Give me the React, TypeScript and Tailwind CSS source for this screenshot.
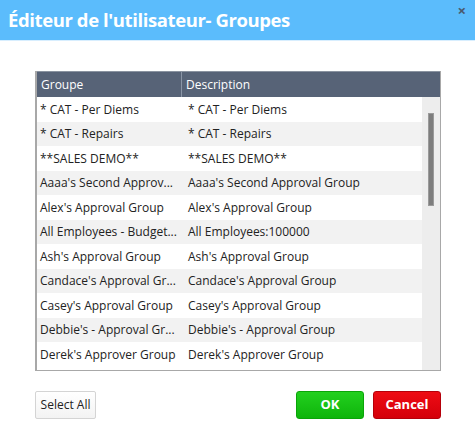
import React from "react";

const rows: [string, string][] = [
  ["* CAT - Per Diems", "* CAT - Per Diems"],
  ["* CAT - Repairs", "* CAT - Repairs"],
  ["**SALES DEMO**", "**SALES DEMO**"],
  ["Aaaa's Second Approv...", "Aaaa's Second Approval Group"],
  ["Alex's Approval Group", "Alex's Approval Group"],
  ["All Employees - Budget...", "All Employees:100000"],
  ["Ash's Approval Group", "Ash's Approval Group"],
  ["Candace's Approval Gr...", "Candace's Approval Group"],
  ["Casey's Approval Group", "Casey's Approval Group"],
  ["Debbie's - Approval Gr...", "Debbie's - Approval Group"],
  ["Derek's Approver Group", "Derek's Approver Group"],
];

export default function App() {
  return (
    <div
      className="w-[475px] h-[428px] bg-white flex flex-col overflow-hidden"
      style={{ fontFamily: '"Open Sans", "Noto Sans", sans-serif' }}
    >
      <div className="h-[41px] bg-[#5bbcfc] border-b border-[#d8eefe] flex items-center justify-between pl-[8px] pr-[9px] shrink-0">
        <span className="text-white font-bold text-[18.5px] leading-none tracking-[-0.4px]">
          Éditeur de l'utilisateur- Groupes
        </span>
        <span className="text-[#4a5a70] text-[15px] font-bold leading-none self-start mt-[3px]">×</span>
      </div>
      <div className="pl-[35px] pt-[30px] flex flex-col">
        <div className="w-[406px] h-[300px] border-l-2 border-r border-b border-[#a8a8a8] flex flex-col">
          <div className="h-[26px] bg-[#576377] flex text-white text-[12px] shrink-0 border-t border-[#8a93a0]">
            <div className="w-[145px] pl-[4px] flex items-center border-r border-[#8a95a6]">Groupe</div>
            <div className="flex-1 pl-[4px] flex items-center">Description</div>
          </div>
          <div className="flex flex-1 overflow-hidden">
            <div className="flex-1 flex flex-col">
              {rows.map((r, i) => (
                <div
                  key={i}
                  className={`h-[24.5px] shrink-0 flex items-center text-[12px] text-[#222] pt-[1px] ${
                    i % 2 === 1 ? "bg-[#f2f2f2]" : "bg-white"
                  }`}
                >
                  <div className="w-[147px] pl-[3px] whitespace-nowrap overflow-hidden">{r[0]}</div>
                  <div className="flex-1 pl-[4px] whitespace-nowrap overflow-hidden">{r[1]}</div>
                </div>
              ))}
            </div>
            <div className="w-[18px] bg-[#ededed] flex justify-center pt-[16px]">
              <div className="w-[6px] h-[93px] bg-[#7d7d7d] border border-[#9a9a9a]" />
            </div>
          </div>
        </div>
        <div className="flex items-center mt-[20px] w-[406px]">
          <button className="w-[61px] h-[28px] border border-[#d4d4d4] bg-gradient-to-b from-white to-[#f3f3f3] text-[12px] text-[#222] rounded-[2px]">
            Select All
          </button>
          <div className="flex-1" />
          <button className="w-[68px] h-[28px] rounded-[3px] bg-gradient-to-b from-[#22d01e] to-[#0db50a] border border-[#0aa508] text-white font-bold text-[13px]">
            OK
          </button>
          <button className="ml-[9px] w-[68px] h-[28px] rounded-[3px] bg-gradient-to-b from-[#ee0c14] to-[#d4000a] border border-[#b5000a] text-white font-bold text-[13px]">
            Cancel
          </button>
        </div>
      </div>
    </div>
  );
}
